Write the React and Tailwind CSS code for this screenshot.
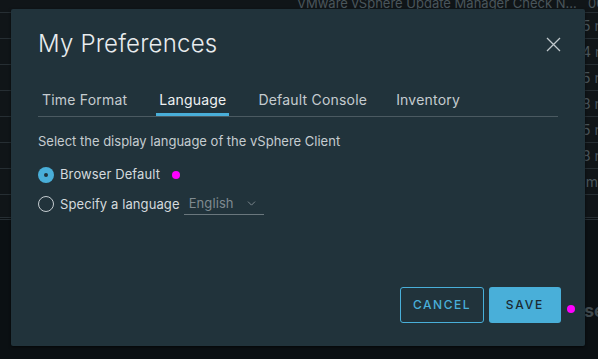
import React from 'react';
import { ChevronDown } from 'lucide-react';

const rows = ['5 m', '4 m', '5 m', '8 m', '5 m', '8 m', 'm'];

const Backdrop = () => (
  <div className="h-[359px] w-[598px] overflow-hidden bg-[#0b1013] text-[#4a565c]">
    <div className="flex h-[12px] items-end overflow-hidden whitespace-nowrap bg-[#101518] text-[13px] leading-none">
      <span className="ml-[297px] translate-y-[-2px]">VMware vSphere Update Manager Check N...</span>
      <span className="ml-auto w-[10px] translate-y-[-2px] overflow-hidden">00</span>
    </div>
    {rows.map((r, i) => (
      <div key={i} className="flex h-[26px] items-center justify-end border-t border-[#262e33] bg-[#101518] text-[14px]">
        <span className="w-[16px] overflow-hidden whitespace-nowrap text-right">{r}</span>
      </div>
    ))}
    <div className="h-[23px] border-t border-[#262e33] bg-[#101518]" />
    <div className="h-[2px] border-t border-[#262e33]" />
    <div className="border-t border-[#262e33]" />
    <div className="mt-[82px] flex justify-end text-[18px] font-bold leading-none text-[#3f494e]">
      <span className="w-[14px] overflow-hidden whitespace-nowrap">se</span>
    </div>
  </div>
);

const Radio = ({ checked }) =>
  checked ? (
    <span className="flex h-[16px] w-[16px] items-center justify-center rounded-full bg-[#49afd9]">
      <span className="h-[4px] w-[4px] rounded-full bg-[#21333b]" />
    </span>
  ) : (
    <span className="h-[16px] w-[16px] rounded-full border border-[#c5ccd0]" />
  );

const Dot = () => <span className="h-[8px] w-[8px] rounded-full bg-[#ff00ff]" />;

const tabs = ['Time Format', 'Language', 'Default Console', 'Inventory'];

export default function App() {
  return (
    <div className="relative h-[359px] w-[598px] overflow-hidden" style={{ fontFamily: 'Inter, "Open Sans", sans-serif' }}>
      <Backdrop />
      <div className="absolute left-[11px] top-[9px] flex h-[337px] w-[574px] flex-col rounded-[2px] bg-[#21333b] px-[27px] shadow-[0_1px_3px_rgba(0,0,0,0.6)]">
        <div className="mt-[20px] flex items-center justify-between">
          <h1 className="text-[24px] font-light leading-[30px] tracking-[0.2px] text-[#e8ecee]">My Preferences</h1>
          <svg width="15" height="15" viewBox="0 0 15 15" className="mr-[-3px] text-[#c0c8cc]">
            <path d="M1 1 L14 14 M14 1 L1 14" stroke="currentColor" strokeWidth="1.3" fill="none" />
          </svg>
        </div>
        <div className="mt-[32px] flex items-end border-b border-[#4b5a61] pl-[1px] text-[14px] leading-[18px] tracking-[0.2px]">
          {tabs.map((t, i) => (
            <div key={t} className={`relative flex items-center ${i === 3 ? '' : i === 2 ? 'mr-[23px]' : 'mr-[26px]'}`}>
              <span className={`px-[3px] ${i === 1 ? 'border-b-[3px] border-[#49afd9] pb-[4px] text-[#eef1f2]' : 'pb-[7px] text-[#c5ccd0]'}`}>{t}</span>
              {i === 1 && (
                <span className="absolute left-[82px] top-[2px]">
                  <Dot />
                </span>
              )}
            </div>
          ))}
        </div>
        <p className="mt-[15px] text-[13px] leading-[18px] text-[#c5ccd0]">Select the display language of the vSphere Client</p>
        <div className="mt-[15px] flex items-center gap-[6px] text-[13px] tracking-[0.1px] text-[#d4dadd]">
          <Radio checked />
          <span>Browser Default</span>
          <span className="ml-[6px] flex"><Dot /></span>
        </div>
        <div className="mt-[9px] flex items-center gap-[6px] text-[13px] tracking-[0.1px] text-[#d4dadd]">
          <Radio />
          <span>Specify a language</span>
          <span className="-ml-[2px] flex w-[80px] items-center justify-between border-b border-[#6a777d] pb-[1px] pl-[5px] pr-[6px] text-[13px] text-[#7f8a90]">
            English
            <ChevronDown className="h-[13px] w-[13px]" strokeWidth={1.75} />
          </span>
        </div>
        <div className="mt-auto mb-[23px] mr-[-3px] flex items-center justify-end gap-[5px]">
          <button className="h-[36px] w-[84px] rounded-[3px] border border-[#49afd9] text-[12px] font-medium tracking-[1.5px] text-[#49afd9]">CANCEL</button>
          <button className="h-[36px] w-[72px] rounded-[3px] bg-[#49afd9] text-[12px] font-medium tracking-[1.8px] text-[#1b2a32]">SAVE</button>
        </div>
      </div>
      <span className="absolute left-[567px] top-[305px] flex"><Dot /></span>
    </div>
  );
}
